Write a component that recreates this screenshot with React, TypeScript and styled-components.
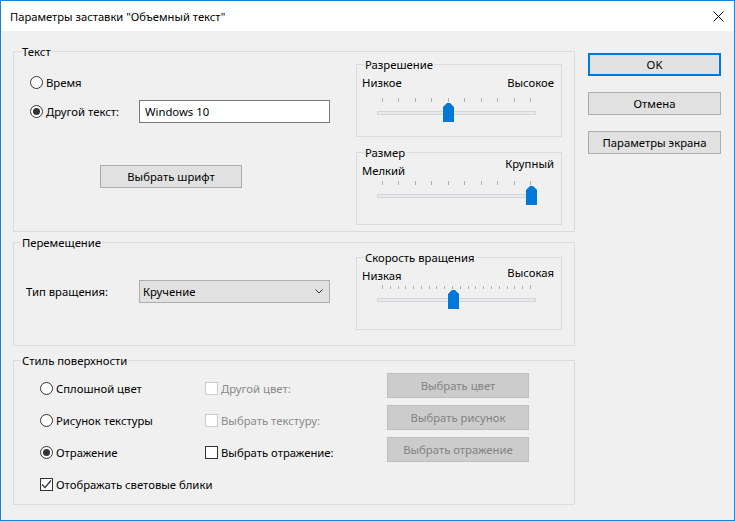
import React from "react";
import styled, { createGlobalStyle } from "styled-components";

const Global = createGlobalStyle`
  html, body { margin: 0; padding: 0; background: #f0f0f0; }
  body {
    font-family: "Noto Sans", "Segoe UI", sans-serif;
    font-size: 11.3px;
    color: #000;
  }
  * { box-sizing: border-box; }
`;

const Window = styled.div`
  width: 735px;
  height: 521px;
  border: 1px solid #1883d7;
  background: #f0f0f0;
  display: flex;
  flex-direction: column;
`;

const TitleBar = styled.div`
  height: 30px;
  background: #fff;
  display: flex;
  align-items: center;
  justify-content: space-between;
  padding: 0 10px 0 9px;
`;

const Title = styled.span`
  line-height: 15px;
  font-size: 11.2px;
`;

const CloseIcon = styled.svg`
  display: block;
`;

const Body = styled.div`
  display: flex;
  padding: 20px 0 0 12px;
`;

const LeftColumn = styled.div`
  width: 562px;
  display: flex;
  flex-direction: column;
`;

const RightColumn = styled.div`
  width: 133px;
  margin-left: 13px;
  padding-top: 2px;
  display: flex;
  flex-direction: column;
  gap: 16px;
`;

const Group = styled.div<{ $h: number; $mt?: number }>`
  border: 1px solid #dcdcdc;
  height: ${(p) => p.$h}px;
  margin-top: ${(p) => p.$mt ?? 0}px;
  display: flex;
  flex-direction: column;
`;

const Legend = styled.div`
  align-self: flex-start;
  margin: -8px 0 0 7px;
  padding: 0 1px;
  line-height: 15px;
  background: #f0f0f0;
`;

const Row = styled.div`
  display: flex;
  justify-content: space-between;
  flex: 1;
`;

const Pane = styled.div<{ $pl: number; $pt: number }>`
  display: flex;
  flex-direction: column;
  padding-left: ${(p) => p.$pl}px;
  padding-top: ${(p) => p.$pt}px;
`;

const SidePane = styled.div<{ $pt: number }>`
  width: 206px;
  margin-right: 12px;
  padding-top: ${(p) => p.$pt}px;
  display: flex;
  flex-direction: column;
  gap: 15px;
`;

const FieldRow = styled.div<{ $h: number; $mt?: number }>`
  display: flex;
  align-items: center;
  height: ${(p) => p.$h}px;
  margin-top: ${(p) => p.$mt ?? 0}px;
`;

const Choice = styled.label<{ $w?: number; $disabled?: boolean }>`
  display: flex;
  align-items: center;
  gap: 3px;
  width: ${(p) => (p.$w ? `${p.$w}px` : "auto")};
  line-height: 15px;
  color: ${(p) => (p.$disabled ? "#8a8a8a" : "#000")};
  white-space: nowrap;
`;

const RadioMark = styled.span<{ $checked?: boolean }>`
  width: 13px;
  height: 13px;
  border-radius: 50%;
  border: 1px solid #333;
  background: #fff;
  display: inline-flex;
  align-items: center;
  justify-content: center;
  flex: none;
  &::after {
    content: "";
    width: 7px;
    height: 7px;
    border-radius: 50%;
    background: #333;
    display: ${(p) => (p.$checked ? "block" : "none")};
  }
`;

const CheckMark = styled.span<{ $disabled?: boolean }>`
  width: 13px;
  height: 13px;
  border: 1px solid ${(p) => (p.$disabled ? "#cccccc" : "#333")};
  background: #fff;
  display: inline-flex;
  align-items: center;
  justify-content: center;
  flex: none;
`;

const FieldLabel = styled.span<{ $w: number }>`
  width: ${(p) => p.$w}px;
  line-height: 15px;
`;

const TextInput = styled.div`
  width: 191px;
  height: 23px;
  border: 1px solid #7a7a7a;
  background: #fff;
  padding-left: 5px;
  display: flex;
  align-items: center;
`;

const Select = styled.div`
  width: 191px;
  height: 23px;
  border: 1px solid #adadad;
  background: #e1e1e1;
  padding: 0 6px 0 3px;
  display: flex;
  align-items: center;
  justify-content: space-between;
`;

const Button = styled.div<{ $w?: number; $h?: number; $default?: boolean; $disabled?: boolean; $ml?: number; $mt?: number }>`
  width: ${(p) => p.$w ?? 133}px;
  height: ${(p) => p.$h ?? 23}px;
  margin-left: ${(p) => p.$ml ?? 0}px;
  margin-top: ${(p) => p.$mt ?? 0}px;
  border: ${(p) => (p.$default ? "2px solid #0078d7" : p.$disabled ? "1px solid #bfbfbf" : "1px solid #adadad")};
  background: ${(p) => (p.$disabled ? "#cccccc" : "#e1e1e1")};
  color: ${(p) => (p.$disabled ? "#838383" : "#000")};
  display: flex;
  align-items: center;
  justify-content: center;
  align-self: flex-start;
  line-height: 15px;
`;

const SliderBox = styled.div`
  border: 1px solid #dcdcdc;
  height: 73px;
  display: flex;
  flex-direction: column;
`;

const Labels = styled.div`
  display: flex;
  justify-content: space-between;
  align-items: flex-start;
  margin-top: 3px;
  padding: 0 7px 0 5px;
  height: 15px;
  line-height: 15px;
`;

const EndLabel = styled.span<{ $raise?: number }>`
  margin-top: ${(p) => -(p.$raise ?? 0)}px;
`;

const Track = styled.div<{ $mt: number }>`
  position: relative;
  width: 159px;
  height: 24px;
  margin: ${(p) => p.$mt}px 0 0 20px;
`;

const Ticks = styled.div`
  display: flex;
  justify-content: space-between;
  align-items: flex-end;
  padding: 0 5px;
  height: 4px;
`;

const Tick = styled.span<{ $short?: boolean }>`
  width: 1px;
  height: ${(p) => (p.$short ? 3 : 4)}px;
  background: #b0b0b0;
`;

const Rail = styled.div`
  margin-top: 9px;
  height: 4px;
  background: #e7eaea;
  border: 1px solid #d6d6d6;
`;

const Thumb = styled.div`
  position: absolute;
  top: 5px;
  width: 11px;
  height: 19px;
  background: #0078d7;
  clip-path: polygon(0 4px, 4px 0, 7px 0, 11px 4px, 11px 19px, 0 19px);
`;

const SurfaceGrid = styled.div`
  display: grid;
  grid-template-columns: 165px 182px 142px;
  grid-auto-rows: 32px;
  align-items: center;
  margin-top: 4px;
  padding-left: 26px;
`;

const Wide = styled.div`
  grid-column: 1 / -1;
`;

type SliderProps = {
  legend: string;
  low: string;
  high: string;
  ticks: number;
  value: number;
  gap: number;
  raise?: number;
};

const Slider = ({ legend, low, high, ticks, value, gap, raise }: SliderProps) => {
  const step = 149 / (ticks - 1);
  const dense = ticks > 12;
  return (
    <SliderBox>
      <Legend>{legend}</Legend>
      <Labels>
        <EndLabel>{low}</EndLabel>
        <EndLabel $raise={raise}>{high}</EndLabel>
      </Labels>
      <Track $mt={gap}>
        <Ticks>
          {Array.from({ length: ticks }, (_, i) => (
            <Tick key={i} $short={dense && i !== 0 && i !== ticks - 1} />
          ))}
        </Ticks>
        <Rail />
        <Thumb style={{ left: Math.round(value * step) }} />
      </Track>
    </SliderBox>
  );
};

const Radio = ({ label, checked, w }: { label: string; checked?: boolean; w?: number }) => (
  <Choice $w={w}>
    <RadioMark $checked={checked} />
    {label}
  </Choice>
);

const Check = ({ label, checked, disabled }: { label: string; checked?: boolean; disabled?: boolean }) => (
  <Choice $disabled={disabled}>
    <CheckMark $disabled={disabled}>
      {checked && (
        <svg width="11" height="11" viewBox="0 0 11 11">
          <polyline points="1,5.5 4,8.5 10,1.5" fill="none" stroke="#333" strokeWidth="1.2" />
        </svg>
      )}
    </CheckMark>
    {label}
  </Choice>
);

export default function App() {
  return (
    <>
      <Global />
      <Window>
        <TitleBar>
          <Title>Параметры заставки "Объемный текст"</Title>
          <CloseIcon width="11" height="11" viewBox="0 0 11 11">
            <path d="M0.5 0.5 L10.5 10.5 M10.5 0.5 L0.5 10.5" stroke="#000" strokeWidth="1" />
          </CloseIcon>
        </TitleBar>
        <Body>
          <LeftColumn>
            <Group $h={181}>
              <Legend>Текст</Legend>
              <Row>
                <Pane $pl={16} $pt={13}>
                  <FieldRow $h={20}>
                    <Radio label="Время" />
                  </FieldRow>
                  <FieldRow $h={23} $mt={8}>
                    <Radio label="Другой текст:" checked w={109} />
                    <TextInput>Windows 10</TextInput>
                  </FieldRow>
                  <Button $w={142} $ml={70} $mt={42}>Выбрать шрифт</Button>
                </Pane>
                <SidePane $pt={5}>
                  <Slider legend="Разрешение" low="Низкое" high="Высокое" ticks={10} value={4} gap={8} />
                  <Slider legend="Размер" low="Мелкий" high="Крупный" ticks={10} value={9} gap={3} raise={7} />
                </SidePane>
              </Row>
            </Group>

            <Group $h={104} $mt={10}>
              <Legend>Перемещение</Legend>
              <Row>
                <Pane $pl={12} $pt={30}>
                  <FieldRow $h={23}>
                    <FieldLabel $w={113}>Тип вращения:</FieldLabel>
                    <Select>
                      Кручение
                      <svg width="8" height="5" viewBox="0 0 8 5">
                        <polyline points="0.5,0.5 4,4 7.5,0.5" fill="none" stroke="#333" strokeWidth="1" />
                      </svg>
                    </Select>
                  </FieldRow>
                </Pane>
                <SidePane $pt={7}>
                  <Slider legend="Скорость вращения" low="Низкая" high="Высокая" ticks={20} value={9} gap={2} raise={3} />
                </SidePane>
              </Row>
            </Group>

            <Group $h={145} $mt={14}>
              <Legend>Стиль поверхности</Legend>
              <SurfaceGrid>
                <Radio label="Сплошной цвет" />
                <Check label="Другой цвет:" disabled />
                <Button $w={142} $h={25} $disabled $mt={1}>Выбрать цвет</Button>
                <Radio label="Рисунок текстуры" />
                <Check label="Выбрать текстуру:" disabled />
                <Button $w={142} $h={25} $disabled $mt={1}>Выбрать рисунок</Button>
                <Radio label="Отражение" checked />
                <Check label="Выбрать отражение:" />
                <Button $w={142} $h={25} $disabled $mt={1}>Выбрать отражение</Button>
                <Wide>
                  <Check label="Отображать световые блики" checked />
                </Wide>
              </SurfaceGrid>
            </Group>
          </LeftColumn>

          <RightColumn>
            <Button $default>OK</Button>
            <Button>Отмена</Button>
            <Button>Параметры экрана</Button>
          </RightColumn>
        </Body>
      </Window>
    </>
  );
}
